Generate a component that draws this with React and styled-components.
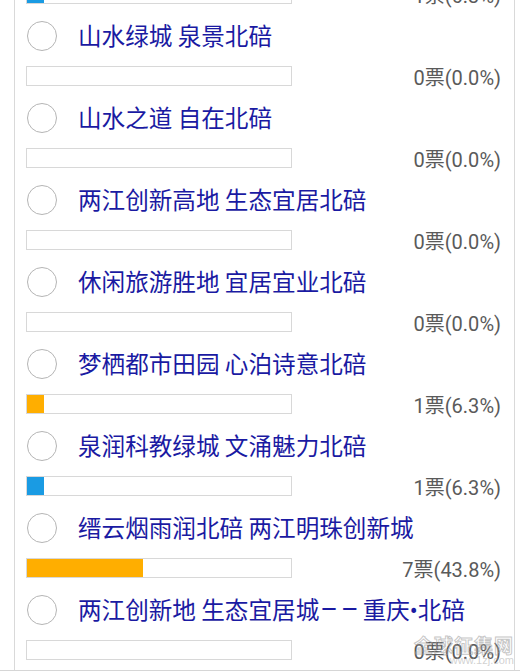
import React from 'react';
import styled, { createGlobalStyle } from 'styled-components'

const Global = createGlobalStyle`
  html, body { margin: 0; padding: 0; background: #fff; }
  body { font-family: Roboto, "Noto Sans CJK SC", sans-serif; }
`

const Pagina = styled.div`
  position: relative;
  height: 671px;
  overflow: hidden;
  box-sizing: border-box;
  border-bottom: 1px solid #d6d6d6;
`

const Cartao = styled.div`
  margin-left: 14px;
  width: 501px;
  height: 100%;
  box-sizing: border-box;
  border-left: 1px solid #d9d9d9;
  border-right: 1px solid #d9d9d9;
  overflow: hidden;
`

const Lista = styled.ul`
  list-style: none;
  margin: -66px 0 0;
  padding: 0;
`

const Item = styled.li`
  height: 82px;
  padding: 0 13px 0 11px;
`

const LinhaTitulo = styled.label`
  display: flex;
  align-items: center;
  height: 40px;
  margin-bottom: 10px;
  padding-left: 1px;
`

const Radio = styled.span`
  flex: none;
  width: 30px;
  height: 30px;
  box-sizing: border-box;
  border-radius: 50%;
  border: 1.5px solid #b5b5b5;
  background: #fff;
`

const Titulo = styled.span`
  margin-left: 21px;
  margin-top: -2px;
  font-family: "Noto Sans CJK SC", sans-serif;
  font-size: 23.6px;
  color: #1a1aa2;
  white-space: nowrap;
`

// travessões e ponto em fonte latina, mais estreitos
const Latino = styled.span`
  font-family: Roboto, sans-serif;
  font-size: ${props => props.tamanho || 'inherit'};
  letter-spacing: ${props => props.espaco || '0'};
  margin: 0 ${props => props.margem || '0'};
`

const LinhaBarra = styled.div`
  display: flex;
  align-items: flex-start;
  justify-content: space-between;
  height: 24px;
`

const Barra = styled.div`
  width: 266px;
  height: 20px;
  box-sizing: border-box;
  border: 1px solid #d8d8d8;
  background: #fff;
  overflow: hidden;
`

const Preenchimento = styled.div`
  height: 100%;
  background: ${props => props.cor};
`

const Votos = styled.span`
  font-family: Roboto, "Noto Sans CJK SC", sans-serif;
  font-size: 20px;
  line-height: 24px;
  color: #5a5a5a;
  white-space: nowrap;
`

const MarcaDagua = styled.div`
  position: absolute;
  right: 6px;
  bottom: 4px;
  text-align: right;
  color: rgba(170, 170, 170, 0.55);
  pointer-events: none;
`

const MarcaNome = styled.div`
  font-family: "Noto Sans CJK SC", sans-serif;
  font-size: 19px;
  font-weight: bold;
  letter-spacing: 1px;
  line-height: 20px;
  color: transparent;
  -webkit-text-stroke: 1px rgba(160, 160, 160, 0.6);
`

const MarcaSite = styled.div`
  font-family: "Liberation Sans", sans-serif;
  font-size: 11px;
  line-height: 11px;
`

const opcoes = [
  { nome: '', votos: 1, pct: '6.3', cor: '#1a9be3' },
  { nome: '山水绿城 泉景北碚', votos: 0, pct: '0.0' },
  { nome: '山水之道 自在北碚', votos: 0, pct: '0.0' },
  { nome: '两江创新高地 生态宜居北碚', votos: 0, pct: '0.0' },
  { nome: '休闲旅游胜地 宜居宜业北碚', votos: 0, pct: '0.0' },
  { nome: '梦栖都市田园 心泊诗意北碚', votos: 1, pct: '6.3', cor: '#ffae00' },
  { nome: '泉润科教绿城 文涌魅力北碚', votos: 1, pct: '6.3', cor: '#1a9be3' },
  { nome: '缙云烟雨润北碚 两江明珠创新城', votos: 7, pct: '43.8', cor: '#ffae00' },
  {
    nome: (
      <>
        两江创新地 生态宜居城<Latino tamanho="27px" espaco="3px" margem="1px">––</Latino>重庆<Latino>•</Latino>北碚
      </>
    ),
    votos: 0,
    pct: '0.0'
  },
]

class App extends React.Component {
  render() {
    const itens = opcoes.map((op, i) => (
      <Item key={i}>
        <LinhaTitulo>
          <Radio />
          <Titulo>{op.nome}</Titulo>
        </LinhaTitulo>
        <LinhaBarra>
          <Barra>
            {op.votos > 0 && (
              <Preenchimento cor={op.cor} style={{ width: op.pct + '%' }} />
            )}
          </Barra>
          <Votos>{op.votos}票({op.pct}%)</Votos>
        </LinhaBarra>
      </Item>
    ))

    return (
      <Pagina>
        <Global />
        <Cartao>
          <Lista>{itens}</Lista>
        </Cartao>
        <MarcaDagua>
          <MarcaNome>全球征集网</MarcaNome>
          <MarcaSite>www.1zj.com</MarcaSite>
        </MarcaDagua>
      </Pagina>
    )
  }
}

export default App
